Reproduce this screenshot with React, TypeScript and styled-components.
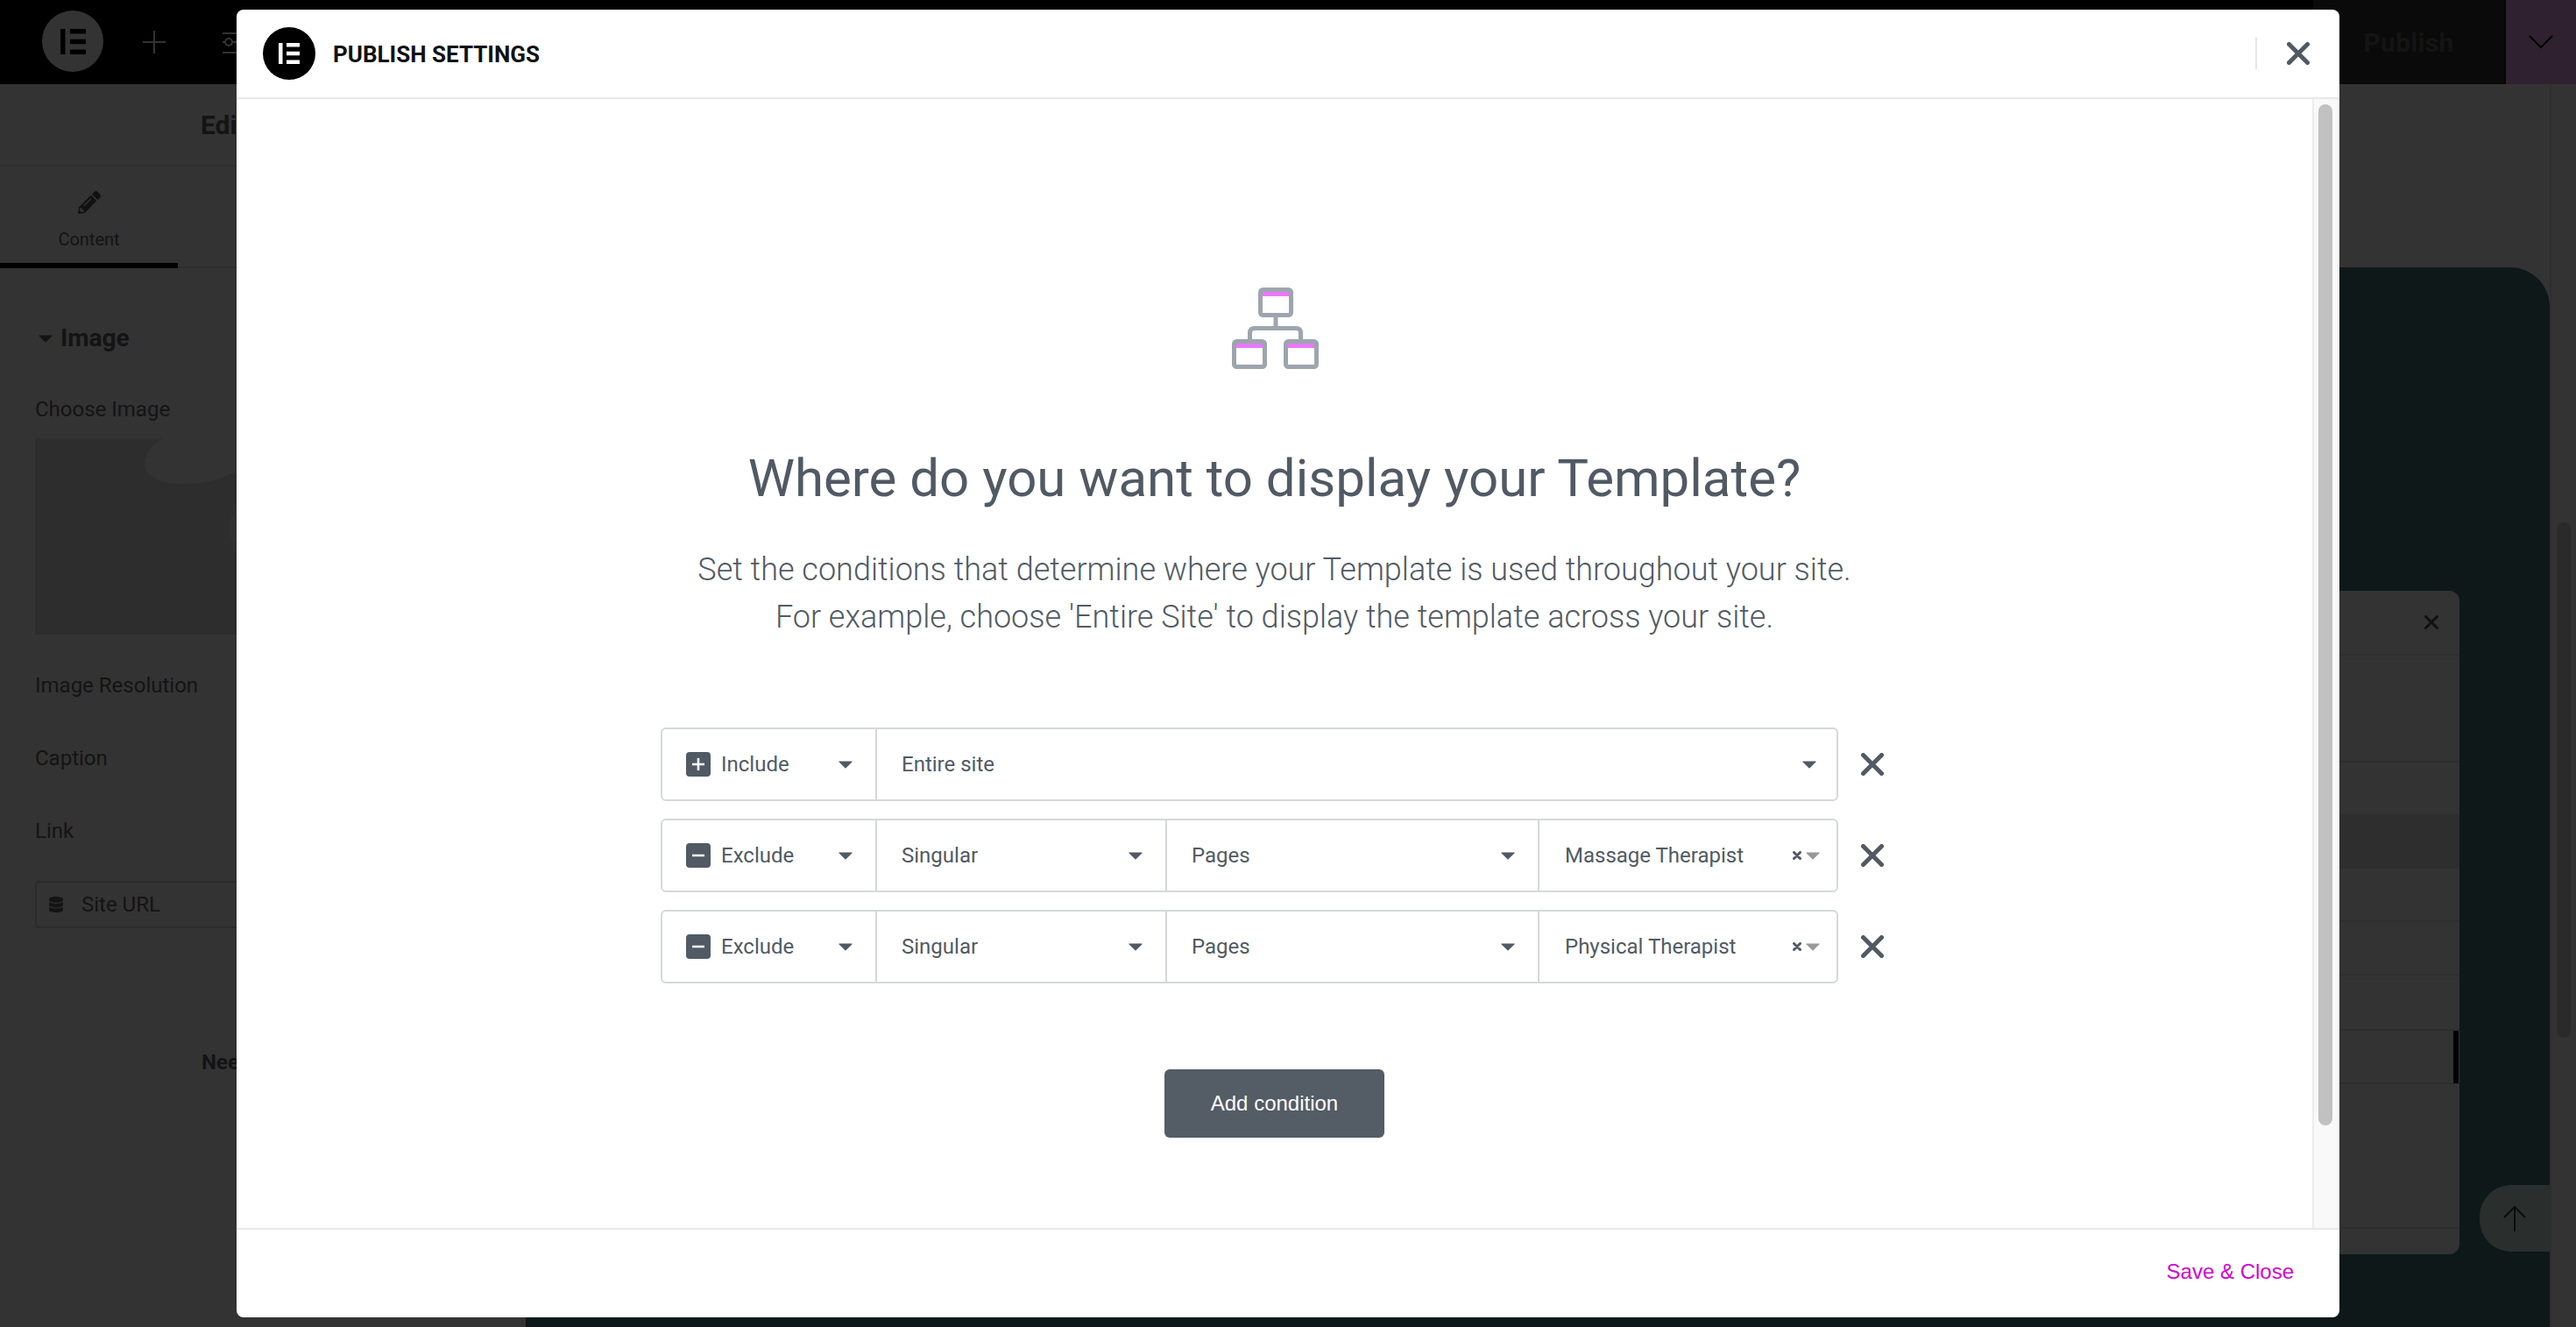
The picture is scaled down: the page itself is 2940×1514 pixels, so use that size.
import React from 'react';
import styled, { createGlobalStyle } from 'styled-components';
import { FaDatabase, FaPencilAlt } from 'react-icons/fa';

const GlobalStyle = createGlobalStyle`
    html, body {
        margin: 0;
        padding: 0;
        background: #000;
    }
    * {
        box-sizing: border-box;
    }
`;

const Page = styled.div`
    position: relative;
    display: flex;
    flex-direction: column;
    width: 2940px;
    height: 1514px;
    overflow: hidden;
    font-family: Roboto, sans-serif;
    background: #333;
`;

/* dimmed editor behind the modal */
const TopBar = styled.div`
    display: flex;
    align-items: stretch;
    flex: 0 0 96px;
    background: #000;
`;
const TopLeft = styled.div`
    display: flex;
    align-items: center;
    flex: 1;
    padding-left: 48px;
    gap: 45px;
`;
const EditorLogo = styled.div`
    width: 70px;
    height: 70px;
    margin-top: -2px;
    border-radius: 50%;
    background: #333;
    color: #000;
    display: flex;
    align-items: center;
    justify-content: center;
`;
const SlidersSlot = styled.div`
    display: flex;
    margin-left: 20px;
`;
const PublishCell = styled.div`
    display: flex;
    align-items: center;
    justify-content: center;
    width: 220px;
    background: #0a0a0a;
    border-right: 2px solid #050505;
    font-size: 30px;
    font-weight: 700;
    letter-spacing: 0.3px;
    color: #141414;
`;
const ChevronCell = styled.div`
    display: flex;
    align-items: center;
    justify-content: center;
    width: 80px;
    background: #2f2130;
`;
const Workspace = styled.div`
    display: flex;
    flex: 1;
    min-height: 0;
`;
const SidePanel = styled.div`
    display: flex;
    flex-direction: column;
    flex: 0 0 600px;
    background: #333;
    color: #141414;
`;
const PanelHeader = styled.div`
    flex: 0 0 94px;
    display: flex;
    align-items: center;
    padding: 0 0 0 229px;
    border-bottom: 2px solid #2e2e2e;
    font-size: 30px;
    font-weight: 700;
    white-space: nowrap;
`;
const Tabs = styled.div`
    display: flex;
    flex: 0 0 116px;
    border-bottom: 2px solid #2e2e2e;
`;
const Tab = styled.div`
    display: flex;
    flex-direction: column;
    align-items: center;
    justify-content: center;
    gap: 17px;
    width: 203px;
    margin-bottom: -2px;
    padding-top: 12px;
    border-bottom: 6px solid #000;
    font-size: 20px;
`;
const PanelBody = styled.div`
    display: flex;
    flex-direction: column;
    padding: 64px 0 0 40px;
`;
const SectionTitle = styled.div`
    display: flex;
    align-items: center;
    gap: 9px;
    margin-left: 4px;
    font-size: 28px;
    font-weight: 700;
    line-height: 32px;
`;
const FieldLabel = styled.div<{ $top: number }>`
    margin-top: ${p => p.$top}px;
    font-size: 24px;
    line-height: 28px;
`;
const ImagePlaceholder = styled.div`
    position: relative;
    width: 560px;
    height: 224px;
    margin-top: 19px;
    background: #2d2d2d;
    overflow: hidden;
`;
const PlaceholderBlob = styled.div`
    position: absolute;
    left: 123px;
    top: -19px;
    width: 144px;
    height: 68px;
    border-radius: 50%;
    background: #333;
    transform: rotate(-14deg);
`;
const PlaceholderShade = styled.div`
    position: absolute;
    left: 221px;
    top: 65px;
    width: 100px;
    height: 75px;
    border-radius: 50%;
    background: #303030;
`;
const SiteUrl = styled.div`
    display: flex;
    align-items: center;
    gap: 20px;
    width: 560px;
    height: 54px;
    margin-top: 43px;
    padding-left: 13px;
    border: 2px solid #2b2b2b;
    border-radius: 4px;
    font-size: 24px;
`;
const NeedHelp = styled.div`
    margin: 139px 0 0 190px;
    font-size: 24px;
    font-weight: 700;
    white-space: nowrap;
`;
const Canvas = styled.div`
    display: flex;
    flex: 1;
    min-width: 0;
    background: #333;
`;
const PreviewColumn = styled.div`
    display: flex;
    flex: 1;
    min-width: 0;
    padding-top: 209px;
`;
const Preview = styled.div`
    position: relative;
    flex: 1;
    background: #0f1818;
    border-radius: 0 45px 0 0;
`;
const FloatingCard = styled.div`
    position: absolute;
    top: 369px;
    right: 103px;
    display: flex;
    flex-direction: column;
    width: 400px;
    height: 757px;
    background: #333;
    border-radius: 12px;
    overflow: hidden;
`;
const CardRow = styled.div<{ $h: number; $dark?: boolean }>`
    position: relative;
    display: flex;
    align-items: center;
    justify-content: flex-end;
    flex: 0 0 ${p => p.$h}px;
    padding-right: 24px;
    background: ${p => (p.$dark ? '#2e2e2e' : '#333')};
    border-bottom: 2px solid #2e2e2e;
`;
const CardMarker = styled.div`
    position: absolute;
    top: 0;
    right: 1px;
    width: 6px;
    height: 60px;
    background: #000;
`;
const UpButton = styled.div`
    position: absolute;
    right: 0;
    top: 1047px;
    display: flex;
    align-items: center;
    justify-content: center;
    width: 80px;
    height: 76px;
    background: #2a2f2e;
    border-radius: 36px 0 0 36px;
`;
const ScrollRail = styled.div`
    display: flex;
    flex: 0 0 30px;
    padding: 500px 6px 0 6px;
    border-left: 2px solid #2e2e2e;
    background: #333;
`;
const RailThumb = styled.div`
    width: 16px;
    height: 588px;
    background: #2a2a2a;
    border-radius: 8px;
`;

/* publish settings modal */
const Overlay = styled.div`
    position: absolute;
    inset: 0;
    display: flex;
    padding: 11px 270px;
`;
const Modal = styled.div`
    display: flex;
    flex-direction: column;
    flex: 1;
    background: #fff;
    border-radius: 8px;
    overflow: hidden;
`;
const ModalHeader = styled.div`
    display: flex;
    align-items: center;
    flex: 0 0 102px;
    padding: 0 34px 0 30px;
    border-bottom: 2px solid #e8e8e8;
`;
const ModalLogo = styled.div`
    display: flex;
    align-items: center;
    justify-content: center;
    width: 60px;
    height: 60px;
    border-radius: 50%;
    background: #000;
    margin-top: -1px;
`;
const ModalTitle = styled.div`
    flex: 1;
    margin: 2px 0 0 20px;
    font-size: 26px;
    font-weight: 700;
    color: #111;
`;
const HeaderDivider = styled.div`
    width: 2px;
    height: 36px;
    margin-right: 34px;
    background: #e5e5e5;
`;
const ModalBody = styled.div`
    display: flex;
    flex: 1;
    min-height: 0;
`;
const Content = styled.div`
    display: flex;
    flex-direction: column;
    align-items: center;
    flex: 1;
    padding-top: 215px;
`;
const Heading = styled.h2`
    margin: 89px 0 0;
    font-size: 60px;
    font-weight: 400;
    line-height: 72px;
    color: #515a64;
`;
const Subheading = styled.p`
    margin: 41px 0 0;
    font-size: 36px;
    font-weight: 300;
    line-height: 54px;
    text-align: center;
    color: #515a64;
`;
const Conditions = styled.div`
    display: flex;
    flex-direction: column;
    gap: 20px;
    width: 1401px;
    margin-top: 99px;
`;
const ConditionRow = styled.div`
    display: flex;
    align-items: center;
`;
const SelectGroup = styled.div`
    display: flex;
    flex: 0 0 1344px;
    height: 84px;
    border: 2px solid #d5d8dc;
    border-radius: 6px;
`;
const SelectCell = styled.div<{ $w?: number; $pl?: number; $pr?: number }>`
    display: flex;
    align-items: center;
    flex: ${p => (p.$w ? `0 0 ${p.$w}px` : '1')};
    padding: 0 ${p => p.$pr ?? 26}px 0 ${p => p.$pl ?? 28}px;
    font-size: 24px;
    color: #515a64;
    border-left: 2px solid #d5d8dc;
    &:first-child {
        border-left: 0;
        padding-left: 27px;
    }
`;
const CellText = styled.span`
    flex: 1;
    white-space: nowrap;
`;
const TypeIcon = styled.span`
    display: flex;
    align-items: center;
    justify-content: center;
    width: 28px;
    height: 28px;
    margin-right: 12px;
    border-radius: 4px;
    background: #515a64;
`;
const ClearGap = styled.span`
    margin-left: 5px;
`;
const RemoveCell = styled.div`
    display: flex;
    flex: 0 0 57px;
    padding-left: 26px;
`;
const AddButton = styled.div`
    display: flex;
    align-items: center;
    justify-content: center;
    width: 251px;
    height: 78px;
    margin-top: 98px;
    border-radius: 6px;
    background: #545c65;
    color: #fff;
    font-family: "Liberation Sans", sans-serif;
    font-size: 24px;
`;
const ScrollTrack = styled.div`
    flex: 0 0 29px;
    padding: 6px 6px 0 5px;
    background: #f9f9f9;
    border-left: 2px solid #ececec;
    border-right: 2px solid #ececec;
`;
const ScrollThumb = styled.div`
    width: 16px;
    height: 1165px;
    border-radius: 8px;
    background: #c1c1c1;
`;
const ModalFooter = styled.div`
    display: flex;
    align-items: center;
    justify-content: flex-end;
    flex: 0 0 102px;
    padding: 0 52px 4px 0;
    border-top: 2px solid #e8e8e8;
`;
const SaveLink = styled.span`
    font-family: "Liberation Sans", sans-serif;
    font-size: 24px;
    color: #d004d4;
`;

const EIcon = ({ size, color }: { size: number; color: string }) => (
    <svg width={size} height={size} viewBox="0 0 32 32" fill={color}>
        <rect x="0" y="0" width="6" height="32" />
        <rect x="12" y="0" width="20" height="6" />
        <rect x="12" y="13" width="20" height="6" />
        <rect x="12" y="26" width="20" height="6" />
    </svg>
);

const Cross = ({ size, stroke, color }: { size: number; stroke: number; color: string }) => (
    <svg width={size} height={size} viewBox={`0 0 ${size} ${size}`} style={{ display: 'block' }}>
        <path
            d={`M${stroke / 2} ${stroke / 2}L${size - stroke / 2} ${size - stroke / 2}M${size - stroke / 2} ${stroke / 2}L${stroke / 2} ${size - stroke / 2}`}
            stroke={color}
            strokeWidth={stroke}
            strokeLinecap="round"
            fill="none"
        />
    </svg>
);

const Caret = ({ color = '#515a64' }: { color?: string }) => (
    <svg width="16" height="9" viewBox="0 0 16 9" style={{ display: 'block', flex: 'none' }}>
        <path d="M1 0.5H15C15.6 0.5 15.8 1.1 15.4 1.5L8.5 8.3C8.2 8.6 7.8 8.6 7.5 8.3L0.6 1.5C0.2 1.1 0.4 0.5 1 0.5Z" fill={color} />
    </svg>
);

const TemplateIcon = () => (
    <svg width="101" height="93" viewBox="-2 0 101 93" fill="none" style={{ display: 'block', flex: 'none' }}>
        <path d="M50 34V46.5M20.5 59V52C20.5 48.5 22.5 46.5 26 46.5H73C76.5 46.5 78.5 48.5 78.5 52V59" stroke="#9da5ae" strokeWidth="5" />
        <rect x="32.5" y="2.5" width="35" height="29" rx="3" stroke="#9da5ae" strokeWidth="5" />
        <rect x="2.5" y="61.5" width="35" height="29" rx="3" stroke="#9da5ae" strokeWidth="5" />
        <rect x="61.5" y="61.5" width="35" height="29" rx="3" stroke="#9da5ae" strokeWidth="5" />
        <rect x="35" y="5" width="30" height="5" fill="#e879f9" />
        <rect x="5" y="64" width="30" height="5" fill="#e879f9" />
        <rect x="64" y="64" width="30" height="5" fill="#e879f9" />
    </svg>
);

interface Condition {
    type: 'Include' | 'Exclude';
    cells: string[];
}

const conditions: Condition[] = [
    { type: 'Include', cells: ['Entire site'] },
    { type: 'Exclude', cells: ['Singular', 'Pages', 'Massage Therapist'] },
    { type: 'Exclude', cells: ['Singular', 'Pages', 'Physical Therapist'] },
];

const cellWidths = [331, 425];

const App = () => {
    return (
        <Page>
            <GlobalStyle />
            <TopBar>
                <TopLeft>
                    <EditorLogo><EIcon size={29} color="#000" /></EditorLogo>
                    <svg width="26" height="26" viewBox="0 0 26 26" stroke="#333" strokeWidth="2"><path d="M13 0V26M0 13H26" /></svg>
                    <SlidersSlot>
                        <svg width="36" height="28" viewBox="0 0 36 28" stroke="#333" strokeWidth="2" fill="none">
                            <path d="M0 4H36M0 14H3M11 14H36M0 26H36" />
                            <circle cx="7" cy="14" r="4" />
                        </svg>
                    </SlidersSlot>
                </TopLeft>
                <PublishCell>Publish</PublishCell>
                <ChevronCell>
                    <svg width="28" height="16" viewBox="0 0 28 16" fill="none" stroke="#000" strokeWidth="2"><path d="M1 1L14 14L27 1" /></svg>
                </ChevronCell>
            </TopBar>
            <Workspace>
                <SidePanel>
                    <PanelHeader>Edit Image</PanelHeader>
                    <Tabs>
                        <Tab><FaPencilAlt size={26} color="#111" />Content</Tab>
                    </Tabs>
                    <PanelBody>
                        <SectionTitle><Caret color="#141414" />Image</SectionTitle>
                        <FieldLabel $top={51}>Choose Image</FieldLabel>
                        <ImagePlaceholder><PlaceholderBlob /><PlaceholderShade /></ImagePlaceholder>
                        <FieldLabel $top={44}>Image Resolution</FieldLabel>
                        <FieldLabel $top={55}>Caption</FieldLabel>
                        <FieldLabel $top={55}>Link</FieldLabel>
                        <SiteUrl><FaDatabase size={18} />Site URL</SiteUrl>
                        <NeedHelp>Need Help</NeedHelp>
                    </PanelBody>
                </SidePanel>
                <Canvas>
                    <PreviewColumn>
                        <Preview>
                            <FloatingCard>
                                <CardRow $h={74}><Cross size={16} stroke={3} color="#111" /></CardRow>
                                <CardRow $h={122} />
                                <CardRow $h={61} />
                                <CardRow $h={60} $dark />
                                <CardRow $h={61} />
                                <CardRow $h={61} />
                                <CardRow $h={63} />
                                <CardRow $h={61}><CardMarker /></CardRow>
                                <CardRow $h={165} />
                            </FloatingCard>
                            <UpButton>
                                <svg width="26" height="30" viewBox="0 0 26 30" fill="none" stroke="#0c0c0c" strokeWidth="2"><path d="M13 30V2M1 14L13 2L25 14" /></svg>
                            </UpButton>
                        </Preview>
                    </PreviewColumn>
                    <ScrollRail><RailThumb /></ScrollRail>
                </Canvas>
            </Workspace>
            <Overlay>
                <Modal>
                    <ModalHeader>
                        <ModalLogo><EIcon size={24} color="#fff" /></ModalLogo>
                        <ModalTitle>PUBLISH SETTINGS</ModalTitle>
                        <HeaderDivider />
                        <Cross size={26} stroke={5} color="#515a64" />
                    </ModalHeader>
                    <ModalBody>
                        <Content>
                            <TemplateIcon />
                            <Heading>Where do you want to display your Template?</Heading>
                            <Subheading>
                                Set the conditions that determine where your Template is used throughout your site.
                                <br />
                                For example, choose 'Entire Site' to display the template across your site.
                            </Subheading>
                            <Conditions>
                                {conditions.map((c, i) => (
                                    <ConditionRow key={i}>
                                        <SelectGroup>
                                            <SelectCell $w={243}>
                                                <TypeIcon>
                                                    <svg width="16" height="16" viewBox="0 0 16 16" stroke="#fff" strokeWidth="2.5">
                                                        {c.type === 'Include' ? <path d="M8 1V15M1 8H15" /> : <path d="M1 8H15" />}
                                                    </svg>
                                                </TypeIcon>
                                                <CellText>{c.type}</CellText>
                                                <Caret />
                                            </SelectCell>
                                            {c.cells.length === 1 && (
                                                <SelectCell $pr={23}>
                                                    <CellText>{c.cells[0]}</CellText>
                                                    <Caret />
                                                </SelectCell>
                                            )}
                                            {c.cells.length > 1 && c.cells.map((cell, j) => {
                                                if (j === 2) {
                                                    return (
                                                        <SelectCell key={cell} $pl={29} $pr={19}>
                                                            <CellText>{cell}</CellText>
                                                            <Cross size={10} stroke={3} color="#515a64" />
                                                            <ClearGap><Caret color="#999" /></ClearGap>
                                                        </SelectCell>
                                                    );
                                                }
                                                return (
                                                    <SelectCell key={cell} $w={cellWidths[j]}>
                                                        <CellText>{cell}</CellText>
                                                        <Caret />
                                                    </SelectCell>
                                                );
                                            })}
                                        </SelectGroup>
                                        <RemoveCell><Cross size={26} stroke={5} color="#515a64" /></RemoveCell>
                                    </ConditionRow>
                                ))}
                            </Conditions>
                            <AddButton>Add condition</AddButton>
                        </Content>
                        <ScrollTrack><ScrollThumb /></ScrollTrack>
                    </ModalBody>
                    <ModalFooter>
                        <SaveLink>Save &amp; Close</SaveLink>
                    </ModalFooter>
                </Modal>
            </Overlay>
        </Page>
    );
};

export default App;
